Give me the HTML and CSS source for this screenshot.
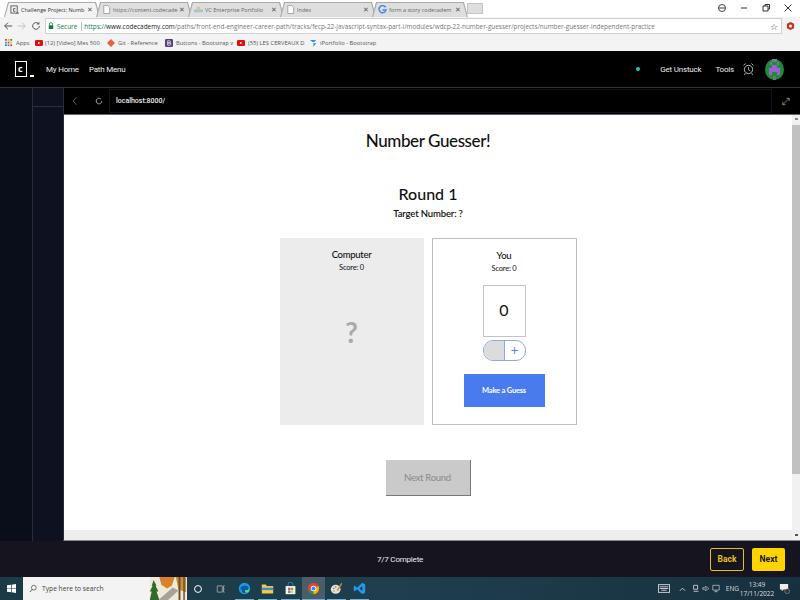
FILE: index.html
```html
<!DOCTYPE html>
<html>
<head>
    <meta charset="UTF-8" />
    <title>Challenge Project: Number Guesser</title>
    <link rel="stylesheet" href="styles.css">
</head>
<body>
<div class="screen">

    <!-- browser tabs -->
    <div class="tabstrip">
        <div class="tab tab-active">
            <svg class="tab-icon" viewBox="0 0 10 10"><rect x="1" y="1" width="7" height="8" fill="none" stroke="#555"/><path d="M6 4H4v3h2M7 9h3" fill="none" stroke="#555"/></svg>
            <span class="tab-title">Challenge Project: Numb</span><span class="tab-x">✕</span>
        </div>
        <div class="tab">
            <svg class="tab-icon" viewBox="0 0 10 10"><path d="M2 .5h4L8.500 3v6.500H2z" fill="#fff" stroke="#888" stroke-width=".8"/></svg>
            <span class="tab-title">https://content.codecade</span><span class="tab-x">✕</span>
        </div>
        <div class="tab">
            <svg class="tab-icon" viewBox="0 0 10 10"><rect y="5" width="10" height="3" fill="#9fc3dc"/><rect x="3" y="2" width="4" height="4" fill="#d9c58b"/></svg>
            <span class="tab-title">VC Enterprise Portfolio</span><span class="tab-x">✕</span>
        </div>
        <div class="tab">
            <svg class="tab-icon" viewBox="0 0 10 10"><path d="M2 .5h4L8.500 3v6.500H2z" fill="#fff" stroke="#888" stroke-width=".8"/></svg>
            <span class="tab-title">Index</span><span class="tab-x">✕</span>
        </div>
        <div class="tab">
            <svg class="tab-icon" viewBox="0 0 10 10"><path d="M8.500 2.500A4 4 0 1 0 9 5.500H5" fill="none" stroke="#4285f4" stroke-width="1.600"/></svg>
            <span class="tab-title">form a story codecadem</span><span class="tab-x">✕</span>
        </div>
        <div class="tab-new"></div>
        <div class="window-btns">
            <svg class="window-btn" viewBox="0 0 10 10"><circle cx="5" cy="5" r="3.500" fill="none" stroke="#444"/><path d="M2 5h6" stroke="#444"/></svg>
            <svg class="window-btn" viewBox="0 0 10 10"><path d="M2 5h6" stroke="#333"/></svg>
            <svg class="window-btn" viewBox="0 0 10 10"><path d="M2 3h5v5H2zM4 3V1.500h4.500V6H7" fill="none" stroke="#333"/></svg>
            <svg class="window-btn" viewBox="0 0 10 10"><path d="M1.500 1.500l7 7M8.500 1.500l-7 7" stroke="#333"/></svg>
        </div>
    </div>

    <!-- address bar -->
    <div class="toolbar">
        <svg class="tool-icon" viewBox="0 0 12 12"><path d="M11 6H2M6 2L2 6l4 4" fill="none" stroke="#555" stroke-width="1.200"/></svg>
        <svg class="tool-icon" viewBox="0 0 12 12"><path d="M1 6h9M6 2l4 4-4 4" fill="none" stroke="#c4c4c4" stroke-width="1.200"/></svg>
        <svg class="tool-icon" viewBox="0 0 12 12"><path d="M10 6a4 4 0 1 1-1.200-2.900" fill="none" stroke="#555" stroke-width="1.200"/><path d="M10 1v3.200H6.800z" fill="#555"/></svg>
        <div class="omnibox">
            <svg class="lock" viewBox="0 0 8 10"><path d="M2 4V2.500a2 2 0 0 1 4 0V4" fill="none" stroke="#0b8043"/><rect x="1" y="4" width="6" height="5" fill="#0b8043"/></svg>
            <span class="secure">Secure</span>
            <span class="url"><span class="url-https">https://</span><span class="url-host">www.codecademy.com</span>/paths/front-end-engineer-career-path/tracks/fecp-22-javascript-syntax-part-i/modules/wdcp-22-number-guesser/projects/number-guesser-independent-practice</span>
            <span class="star">☆</span>
        </div>
        <svg class="ext-icon" viewBox="0 0 10 10"><path d="M5 .5l4 2v5l-4 2-4-2v-5z" fill="#c8321e"/><circle cx="5" cy="5" r="1.800" fill="#fff"/></svg>
    </div>

    <!-- bookmarks -->
    <div class="bookmarks">
        <svg class="mark-icon" viewBox="0 0 9 9"><path d="M0 0h2v2H0z" fill="#d23f31"/><path d="M3 0h2v2H3z" fill="#f4b400"/><path d="M6 0h2v2H6z" fill="#0f9d58"/><path d="M0 3h2v2H0z" fill="#4285f4"/><path d="M3 3h2v2H3z" fill="#d23f31"/><path d="M6 3h2v2H6z" fill="#f4b400"/><path d="M0 6h2v2H0z" fill="#0f9d58"/><path d="M3 6h2v2H3z" fill="#4285f4"/><path d="M6 6h2v2H6z" fill="#d23f31"/></svg>
        <span class="mark mark-apps">Apps</span>
        <svg class="mark-icon" viewBox="0 0 9 9"><rect y="1" width="9" height="7" rx="1.500" fill="#e01010"/><path d="M3.500 3v3L6 4.500z" fill="#fff"/></svg>
        <span class="mark mark-yt1">(12) [Video] Mes 500</span>
        <svg class="mark-icon" viewBox="0 0 9 9"><path d="M4.500 0L9 4.500 4.500 9 0 4.500z" fill="#e8603c"/></svg>
        <span class="mark mark-git">Git - Reference</span>
        <svg class="mark-icon" viewBox="0 0 9 9"><rect width="9" height="9" rx="1.500" fill="#563d7c"/><path d="M3 2h2a1.200 1.200 0 0 1 0 2.500H3zM3 4.500h2.300a1.200 1.200 0 0 1 0 2.500H3z" fill="none" stroke="#fff" stroke-width=".8"/></svg>
        <span class="mark mark-boot">Buttons - Bootstrap v</span>
        <svg class="mark-icon" viewBox="0 0 9 9"><rect y="1" width="9" height="7" rx="1.500" fill="#e01010"/><path d="M3.500 3v3L6 4.500z" fill="#fff"/></svg>
        <span class="mark mark-yt2">(55) LES CERVEAUX D</span>
        <svg class="mark-icon" viewBox="0 0 9 9"><path d="M1 1h7L6 3.500H4zM5 4.500h3L5 9z" fill="#2c8fe0"/></svg>
        <span class="mark">iPortfolio - Bootstrap</span>
    </div>

    <!-- codecademy nav -->
    <nav class="topnav">
        <div class="logo"><span class="logo-box">c</span><span class="logo-under"></span></div>
        <a class="nav-link nav-home">My Home</a>
        <a class="nav-link">Path Menu</a>
        <span class="status-dot"></span>
        <a class="nav-link nav-unstuck">Get Unstuck</a>
        <a class="nav-link nav-tools">Tools</a>
        <svg class="alarm" viewBox="0 0 12 14"><circle cx="6" cy="7.500" r="4.500" fill="none" stroke="#ddd" stroke-width=".9"/><path d="M6 5v3l2 1M.5 3L3 1M11.500 3L9 1M2.500 11.500l-1 2M9.500 11.500l1 2" fill="none" stroke="#ddd" stroke-width=".8"/></svg>
        <svg class="avatar" viewBox="0 0 19 21" preserveAspectRatio="none"><ellipse cx="9.500" cy="10.500" rx="9.500" ry="10.500" fill="#1f8a3b"/><path d="M7 0h5v3h2v3h-2V3H7v3H5V3h2z" fill="#6f7f92"/><path d="M7 6h5v3h3v4H4V9h3z" fill="#a05fd6"/><path d="M4 13h3v3H4zM12 13h3v3h-3z" fill="#a05fd6"/><path d="M8 17h3v4H8z" fill="#5f7d68"/></svg>
    </nav>

    <div class="workspace">
        <aside class="sidebar">
            <div class="side-rail"></div>
            <div class="side-main"><div class="side-head"></div></div>
        </aside>

        <main class="panel">
            <div class="panel-bar">
                <svg class="bar-back" viewBox="0 0 8 12"><path d="M6 1L1.500 6 6 11" fill="none" stroke="#777"/></svg>
                <svg class="bar-reload" viewBox="0 0 10 10"><path d="M8.500 5a3.500 3.500 0 1 1-1.200-2.600" fill="none" stroke="#ccc"/></svg>
                <div class="bar-url">localhost:8000/</div>
                <div class="bar-expand">
                    <svg class="expand-icon" viewBox="0 0 10 10"><path d="M1 9l8-8M5.500 1H9v3.500M1 5.500V9h3.500" fill="none" stroke="#bbb" stroke-width=".8"/></svg>
                </div>
            </div>

            <div class="preview">
                <div class="preview-main">
                    <div class="game">
                        <h1 class="game-title">Number Guesser!</h1>
                        <h2 class="round">Round 1</h2>
                        <p class="target">Target Number: ?</p>

                        <div class="cards">
                            <section class="card card-computer">
                                <h3 class="card-name">Computer</h3>
                                <p class="card-score">Score: 0</p>
                                <div class="mystery">?</div>
                            </section>
                            <section class="card card-you">
                                <h3 class="card-name">You</h3>
                                <p class="card-score">Score: 0</p>
                                <div class="guess-box">0</div>
                                <div class="stepper">
                                    <span class="step step-minus"></span>
                                    <span class="step step-plus">+</span>
                                </div>
                                <button type="button" class="guess-btn">Make a Guess</button>
                            </section>
                        </div>

                        <button type="button" class="next-round">Next Round</button>
                    </div>
                    <div class="hscroll"></div>
                </div>
                <div class="scrollbar">
                    <span class="scroll-up"></span>
                    <span class="scroll-thumb"></span>
                    <span class="scroll-down"></span>
                </div>
            </div>
        </main>
    </div>

    <!-- progress footer -->
    <footer class="progress">
        <span class="progress-text">7/7 Complete</span>
        <div class="progress-btns">
            <button type="button" class="btn-back">Back</button>
            <button type="button" class="btn-next">Next</button>
        </div>
    </footer>

    <!-- windows taskbar -->
    <div class="taskbar">
        <svg class="start" viewBox="0 0 10 10"><path d="M0 1.500l4.500-.7v3.900H0zM5.200.7L10 0v4.700H5.200zM0 5.300h4.500v3.900L0 8.500zM5.200 5.300H10V10l-4.800-.7z" fill="#fff"/></svg>
        <div class="search">
            <svg class="search-icon" viewBox="0 0 10 10"><circle cx="6" cy="4" r="3" fill="none" stroke="#333" stroke-width=".8"/><path d="M4 6.200L1 9.500" stroke="#333"/></svg>
            <span class="search-text">Type here to search</span>
            <svg class="search-art" viewBox="0 0 38 24">
                <rect width="38" height="24" fill="#efe9dc"/>
                <path d="M4 3l3 6H6l3 6H7l3 9H0l2-9H0l3-6H2z" fill="#2f6b2a"/>
                <path d="M10 0h16l-3 9-5 3-6-4z" fill="#d9822b"/>
                <path d="M27 0h11v16l-8-3z" fill="#c9923a"/>
                <path d="M9 24l15-13 6 3-11 10z" fill="#a7a29a"/>
                <path d="M30 0h2v24h-2zM35 0h1.500v24H35z" fill="#6e4a25"/>
            </svg>
        </div>
        <svg class="tb-icon" viewBox="0 0 16 16"><circle cx="8" cy="8" r="5.500" fill="none" stroke="#fff" stroke-width="1.600"/></svg>
        <svg class="tb-icon" viewBox="0 0 16 16"><path d="M2 3h8v10H2zM12 3h2M12 8h2M12 13h2M12 3v10" fill="none" stroke="#ccc"/></svg>
        <span class="tb-app"><svg viewBox="0 0 16 16"><circle cx="8" cy="8" r="7" fill="#1b9de2"/><path d="M3 9a5 4 0 0 1 10-1c0 2-2 2-4 2-1 1 0 3 2 3-4 2-7-1-6-3z" fill="#0c5aa6"/><path d="M9 10c2 0 4 0 5-2 0 3-1 5-3 5-2 0-3-1-2-3z" fill="#5fdc6b"/></svg></span>
        <span class="tb-app"><svg viewBox="0 0 16 16"><path d="M1 3h5l1 2h8v9H1z" fill="#f4c84a"/><path d="M1 7h14v3H1z" fill="#3f8ed8"/></svg></span>
        <span class="tb-app"><svg viewBox="0 0 16 16"><path d="M2 5h12v10H2z" fill="#f5f5f5"/><path d="M5 5V3a3 3 0 0 1 6 0v2" fill="none" stroke="#3f8ed8"/><path d="M5 7h3v3H5z" fill="#e5533d"/><path d="M8.500 7h3v3h-3z" fill="#6dbb45"/><path d="M5 10.500h3v3H5z" fill="#3f8ed8"/><path d="M8.500 10.500h3v3h-3z" fill="#f4c84a"/></svg></span>
        <span class="tb-app tb-active"><svg viewBox="0 0 16 16"><circle cx="8" cy="8" r="7" fill="#db4437"/><path d="M8 8L2 12a7 7 0 0 0 6 3z" fill="#0f9d58"/><path d="M8 8l6-3a7 7 0 0 1-6 10z" fill="#f4b400"/><circle cx="8" cy="8" r="3.400" fill="#fff"/><circle cx="8" cy="8" r="2.500" fill="#4285f4"/></svg></span>
        <span class="tb-app"><svg viewBox="0 0 16 16"><ellipse cx="7" cy="9" rx="6" ry="5.500" fill="#e8e1d5"/><circle cx="4.500" cy="8" r="1" fill="#d9483b"/><circle cx="7" cy="6" r="1" fill="#3f8ed8"/><circle cx="5" cy="11" r="1" fill="#6dbb45"/><path d="M8 10l6-9 1 1-5 9z" fill="#c9923a"/></svg></span>
        <span class="tb-app"><svg viewBox="0 0 16 16"><path d="M11.500 1L15 3v10l-3.500 2L5 9l-3 2.500L1 10.500v-5L2 4.500 5 7zM11.500 4.800L8 8l3.500 3.200z" fill="#1f9cf0"/></svg></span>

        <div class="tray">
            <svg class="tray-kbd" viewBox="0 0 14 10"><rect x=".5" y=".5" width="13" height="9" fill="none" stroke="#ddd"/><path d="M2 3h10M2 5h10M4 7h6" stroke="#ddd"/></svg>
            <svg class="tray-up" viewBox="0 0 8 6"><path d="M1 5l3-3 3 3" fill="none" stroke="#ddd"/></svg>
            <svg class="tray-icon" viewBox="0 0 10 10"><path d="M2 1h5v5H2zM2 8.500h6" fill="none" stroke="#ddd"/></svg>
            <svg class="tray-icon" viewBox="0 0 10 10"><path d="M1 4h2l2-2v6L3 6H1zM7 3a3 3 0 0 1 0 4" fill="none" stroke="#ddd" stroke-width=".8"/></svg>
            <svg class="tray-icon" viewBox="0 0 10 10"><path d="M1 1h8v6H1zM5 7v2M3 9h4" fill="none" stroke="#ddd" stroke-width=".8"/></svg>
            <span class="tray-lang">ENG</span>
            <div class="clock"><span>13:49</span><span>17/11/2022</span></div>
            <svg class="tray-note" viewBox="0 0 12 12"><path d="M1 1h9v6H5L3 9V7H1z" fill="#eee"/><circle cx="9" cy="9" r="2.700" fill="#333" stroke="#bbb" stroke-width=".5"/></svg>
        </div>
    </div>
</div>
</body>
</html>
```

FILE: styles.css
```css
* {
    box-sizing: border-box;
}

html, body {
    margin: 0;
    padding: 0;
    overflow: hidden;
}

.screen {
    width: 800px;
    height: 600px;
    display: flex;
    flex-direction: column;
    font-family: "Open Sans", "Liberation Sans", sans-serif;
    background-color: #fff;
}

/* browser tabs */
.tabstrip {
    height: 17px;
    display: flex;
    align-items: flex-end;
    padding-left: 4px;
    background-color: #fff;
    flex-shrink: 0;
}

.tab {
    position: relative;
    isolation: isolate;
    width: 96px;
    height: 15px;
    margin-right: -4px;
    display: flex;
    align-items: center;
    gap: 2px;
    padding: 0 7px 0 6px;
    background-color: #a9a9a9;
    clip-path: polygon(4px 0, calc(100% - 4px) 0, 100% 100%, 0 100%);
    font-size: 5.5px;
    color: #666;
    white-space: nowrap;
}

/* the fill of the tab, the grey behind it shows as an outline */
.tab::before {
    content: "";
    position: absolute;
    inset: 1px 1px 0;
    z-index: -1;
    background-color: #dedede;
    clip-path: polygon(4px 0, calc(100% - 4px) 0, 100% 100%, 0 100%);
}

.tab-active {
    color: #333;
}

.tab-active::before {
    background-color: #f3f3f3;
}

.tab-icon {
    width: 9px;
    height: 9px;
    flex-shrink: 0;
}

.tab-title {
    flex: 1;
}

.tab-x {
    font-size: 6.5px;
    color: #555;
}

.tab-new {
    width: 16px;
    height: 11px;
    margin-left: 3px;
    margin-bottom: 3px;
    background-color: #dedede;
    border: 1px solid #c4c4c4;
}

.window-btns {
    margin-left: auto;
    display: flex;
    gap: 12px;
    padding: 0 7px 4px 0;
}

.window-btn {
    width: 10px;
    height: 10px;
}

/* address bar */
.toolbar {
    height: 18px;
    display: flex;
    align-items: center;
    gap: 4px;
    padding-left: 3px;
    background-color: #f3f3f3;
    flex-shrink: 0;
}

.tool-icon {
    width: 10px;
    height: 10px;
}

.omnibox {
    width: 737px;
    height: 16px;
    display: flex;
    align-items: center;
    padding: 0 3px 0 2px;
    background-color: #fff;
    border: 1px solid #cfcfcf;
    font-size: 6.4px;
    white-space: nowrap;
}

.lock {
    width: 6px;
    height: 8px;
    flex-shrink: 0;
}

.secure {
    margin-left: 3px;
    padding-right: 4px;
    margin-right: 2px;
    color: #0b8043;
    border-right: 1px solid #bbb;
}

.url {
    color: #777;
    flex: 1;
}

.url-https {
    color: #0b8043;
}

.url-host {
    color: #222;
}

.star {
    font-size: 9px;
    color: #444;
}

.ext-icon {
    width: 9px;
    height: 10px;
    flex-shrink: 0;
}

/* bookmarks */
.bookmarks {
    height: 16px;
    display: flex;
    align-items: center;
    padding-left: 5px;
    background-color: #f3f3f3;
    font-size: 5.8px;
    color: #555;
    white-space: nowrap;
    flex-shrink: 0;
}

.mark-icon {
    width: 8px;
    height: 8px;
    flex-shrink: 0;
}

.mark {
    margin-left: 3px;
}

.mark-apps { width: 19px; }
.mark-yt1 { width: 54px; margin-left: 2px; margin-right: 8px; }
.mark-git { width: 41px; margin-right: 6px; }
.mark-boot { width: 54px; margin-left: 3px; margin-right: 7px; }
.mark-yt2 { width: 54px; margin-left: 3px; margin-right: 7px; }

/* codecademy nav */
.topnav {
    height: 37px;
    display: flex;
    align-items: center;
    padding: 0 16px 0 15px;
    background-color: #000;
    border-bottom: 1px solid #333;
    flex-shrink: 0;
}

.logo {
    display: flex;
    align-items: flex-end;
    width: 31px;
}

.logo-box {
    width: 12px;
    height: 16px;
    border: 1.5px solid #fff;
    color: #fff;
    font-size: 9px;
    font-weight: 700;
    line-height: 13px;
    padding-left: 2px;
}

.logo-under {
    width: 4px;
    height: 2px;
    margin-left: 3px;
    background-color: #fff;
}

.nav-link {
    color: #eee;
    font-family: Roboto, "Liberation Sans", sans-serif;
    font-size: 8px;
    letter-spacing: -.2px;
    white-space: nowrap;
}

.nav-home {
    margin-right: 10px;
}

.status-dot {
    width: 4px;
    height: 4px;
    margin-left: auto;
    margin-right: 20px;
    border-radius: 50%;
    background-color: #2fc4b2;
}

.nav-unstuck {
    margin-right: 14px;
}

.nav-tools {
    margin-right: 9px;
}

.alarm {
    width: 11px;
    height: 14px;
    margin-right: 11px;
}

.avatar {
    width: 19px;
    height: 21px;
}

/* workspace */
.workspace {
    flex: 1;
    display: flex;
    min-height: 0;
    background-color: #0e1120;
}

.sidebar {
    width: 64px;
    display: flex;
    flex-shrink: 0;
}

.side-rail {
    width: 33px;
    background-color: #0a0e1b;
    border-right: 1px solid #2b2d3d;
}

.side-main {
    flex: 1;
}

.side-head {
    height: 19px;
    border-bottom: 1px solid #2b2d3d;
}

.panel {
    flex: 1;
    display: flex;
    flex-direction: column;
    min-width: 0;
    border-bottom: 1px solid #888;
    border-left: 1px solid #2b2d3d;
    margin-left: -1px;
}

.panel-bar {
    height: 27px;
    display: flex;
    align-items: center;
    background-color: #000;
    border-bottom: 1px solid #666;
    flex-shrink: 0;
}

.bar-back {
    width: 6px;
    height: 10px;
    margin-left: 8px;
}

.bar-reload {
    width: 8px;
    height: 8px;
    margin-left: 17px;
    margin-right: 6px;
}

.bar-url {
    flex: 1;
    height: 24px;
    padding-left: 6px;
    color: #eee;
    font-family: Roboto, "Liberation Sans", sans-serif;
    font-size: 7px;
    font-weight: 500;
    line-height: 22px;
    border: 1px solid #10131f;
}

.bar-expand {
    width: 28px;
    display: flex;
    justify-content: center;
}

.expand-icon {
    width: 8px;
    height: 9px;
}

.preview {
    flex: 1;
    display: flex;
    min-height: 0;
    background-color: #fff;
}

.preview-main {
    flex: 1;
    display: flex;
    flex-direction: column;
    min-width: 0;
}

.game {
    flex: 1;
    display: flex;
    flex-direction: column;
    align-items: center;
    color: #111;
    font-family: Lato, "Open Sans", sans-serif;
}

.game-title {
    margin: 12px 0 0;
    font-size: 17px;
    font-weight: 500;
    letter-spacing: -.4px;
    line-height: 27px;
}

.round {
    margin: 28px 0 0;
    font-size: 16px;
    font-weight: 500;
    line-height: 24px;
}

.target {
    margin: 1px 0 0;
    font-size: 9.5px;
    font-weight: 600;
    letter-spacing: -.15px;
    line-height: 14px;
}

.cards {
    display: flex;
    gap: 8px;
    margin: 17px 0 0;
}

.card {
    width: 145px;
    height: 187px;
    display: flex;
    flex-direction: column;
    align-items: center;
    padding-top: 10px;
}

.card-computer {
    width: 144px;
    background-color: #ececec;
}

.card-you {
    border: 1px solid #bdbdbd;
}

.card-name {
    margin: 0;
    font-size: 9.5px;
    font-weight: 500;
    letter-spacing: -.3px;
    line-height: 14px;
}

.card-score {
    margin: 0;
    font-size: 7.5px;
    letter-spacing: -.2px;
    line-height: 12px;
}

.mystery {
    margin-top: 40px;
    color: #aaa;
    font-size: 28px;
    font-weight: 700;
    line-height: 36px;
}

.guess-box {
    width: 43px;
    height: 52px;
    margin-top: 10px;
    border: 1px solid #c4c4c4;
    font-size: 16px;
    line-height: 48px;
    text-align: center;
}

.stepper {
    width: 43px;
    height: 21px;
    display: flex;
    margin-top: 3px;
    border: 1px solid #8fa8e0;
    border-radius: 10px;
    overflow: hidden;
}

.step {
    flex: 1;
}

.step-minus {
    background-color: #dcdcdc;
    border-right: 1px solid #8fa8e0;
}

.step-plus {
    color: #5f83dc;
    font-size: 13px;
    line-height: 18px;
    text-align: center;
}

.guess-btn {
    width: 81px;
    height: 33px;
    margin-top: 13px;
    padding: 0;
    border: none;
    background-color: #4a7bee;
    color: #fff;
    font-family: inherit;
    font-size: 7.5px;
    font-weight: 700;
    letter-spacing: -.2px;
}

.next-round {
    width: 85px;
    height: 36px;
    margin-top: 35px;
    padding: 0;
    border: none;
    border-right: 1px solid #777;
    border-bottom: 1px solid #777;
    background-color: #cacaca;
    color: #8e8e8e;
    font-family: inherit;
    font-size: 9.5px;
    font-weight: 500;
    letter-spacing: -.3px;
}

.scrollbar {
    width: 8px;
    display: flex;
    flex-direction: column;
    background-color: #f1f1f1;
}

.scroll-up {
    height: 10px;
    background: linear-gradient(#f1f1f1 3px, #888 3px, #888 5px, #f1f1f1 5px) center / 3px 100% no-repeat;
}

.scroll-thumb {
    height: 349px;
    background-color: #c1c1c1;
}

.scroll-down {
    height: 10px;
    margin-top: auto;
    background: linear-gradient(#f1f1f1 4px, #555 4px, #555 6px, #f1f1f1 6px) center / 3px 100% no-repeat;
}

.hscroll {
    height: 10px;
    background-color: #eee;
    flex-shrink: 0;
}

/* progress footer */
.progress {
    height: 36px;
    display: grid;
    grid-template-columns: 1fr auto 1fr;
    align-items: center;
    padding: 0 15px;
    background-color: #15141f;
    flex-shrink: 0;
}

.progress-text {
    grid-column: 2;
    color: #eee;
    font-family: Roboto, "Liberation Sans", sans-serif;
    font-size: 8px;
    letter-spacing: -.2px;
}

.progress-btns {
    justify-self: end;
    display: flex;
    gap: 8px;
}

.btn-back, .btn-next {
    width: 34px;
    height: 23px;
    padding: 0;
    border-radius: 2px;
    font-family: Roboto, "Liberation Sans", sans-serif;
    font-size: 8.5px;
    font-weight: 700;
}

.btn-back {
    background-color: transparent;
    border: 1px solid #e8c01a;
    color: #e8c01a;
}

.btn-next {
    width: 33px;
    background-color: #ffd300;
    border: none;
    color: #15141f;
}

/* windows taskbar */
.taskbar {
    height: 23px;
    display: flex;
    align-items: center;
    background: linear-gradient(90deg, #1c3a45, #1f3f4e 50%, #17303f);
    flex-shrink: 0;
}

.start {
    width: 9px;
    height: 9px;
    margin-left: 7px;
    margin-right: 7px;
}

.search {
    width: 164px;
    height: 23px;
    display: flex;
    align-items: center;
    background-color: #f3f3f3;
}

.search-icon {
    width: 8px;
    height: 9px;
    margin-left: 6px;
    margin-right: 5px;
}

.search-text {
    flex: 1;
    color: #444;
    font-size: 6.7px;
}

.search-art {
    width: 38px;
    height: 23px;
}

.tb-icon {
    width: 10px;
    height: 10px;
    margin-left: 6px;
    margin-right: 7px;
}

.tb-app {
    width: 19px;
    height: 23px;
    margin: 0 2px;
    display: flex;
    align-items: center;
    justify-content: center;
    border-bottom: 1px solid #6db3dc;
}

.tb-app svg {
    width: 13px;
    height: 13px;
}

.tb-active {
    width: 23px;
    margin: 0;
    background-color: #4a5d68;
}

.tray {
    margin-left: auto;
    display: flex;
    align-items: center;
    color: #ddd;
    font-size: 6.5px;
    padding-right: 10px;
}

.tray-kbd {
    width: 12px;
    height: 9px;
    margin-right: 9px;
}

.tray-up {
    width: 7px;
    height: 6px;
    margin-right: 5px;
}

.tray-icon {
    width: 8px;
    height: 9px;
    margin: 0 1px;
}

.tray-lang {
    margin-left: 5px;
    margin-right: 3px;
}

.clock {
    width: 30px;
    display: flex;
    flex-direction: column;
    align-items: center;
    line-height: 9px;
    margin-right: 7px;
}

.tray-note {
    width: 11px;
    height: 11px;
}
```
